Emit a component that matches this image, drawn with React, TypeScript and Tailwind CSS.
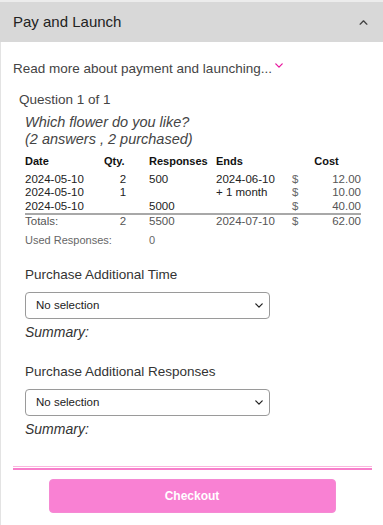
import React from "react";

const rows = [
  { date: "2024-05-10", qty: "2", resp: "500", ends: "2024-06-10", cost: "12.00" },
  { date: "2024-05-10", qty: "1", resp: "", ends: "+ 1 month", cost: "10.00" },
  { date: "2024-05-10", qty: "", resp: "5000", ends: "", cost: "40.00" },
];

const ChevronDown: React.FC<{ className?: string }> = ({ className }) => (
  <svg viewBox="0 0 10 6" className={className} fill="none" stroke="currentColor" strokeWidth="1.6" strokeLinecap="round" strokeLinejoin="round">
    <path d="M1 1l4 4 4-4" />
  </svg>
);

const PurchaseBlock: React.FC<{ title: string }> = ({ title }) => (
  <div className="pl-[12px]">
    <div className="text-[13.5px] leading-[18px] text-[#333]">{title}</div>
    <div className="relative mt-[8px] w-[245px]">
      <select className="h-[27px] w-full appearance-none rounded-[4px] border border-[#9a9a9a] bg-white pl-[10px] text-[11.5px] text-[#222] outline-none">
        <option>No selection</option>
      </select>
      <ChevronDown className="pointer-events-none absolute right-[7px] top-[11px] h-[5px] w-[8px] text-[#222]" />
    </div>
    <div className="mt-[4px] text-[14px] italic leading-[18px] text-[#333]">Summary:</div>
  </div>
);

const App: React.FC = () => {
  return (
    <div className="h-[525px] w-[383px] overflow-hidden bg-white font-['Liberation_Sans',Arial,sans-serif] text-[#333]">
      {/* Accordion header */}
      <div className="flex h-[42px] items-center justify-between border-t-2 border-[#ececec] bg-[#d8d8d8] pl-[13px] pr-[15px]">
        <span className="text-[15px] text-[#222]">Pay and Launch</span>
        <svg viewBox="0 0 10 6" className="h-[5px] w-[9px] text-[#444]" fill="none" stroke="currentColor" strokeWidth="1.6" strokeLinecap="round" strokeLinejoin="round">
          <path d="M1 5l4-4 4 4" />
        </svg>
      </div>

      {/* Body */}
      <div className="h-[483px] border-l border-[#e3e3e3] px-[12px] pt-[18px]">
        <div className="flex items-start text-[13.5px] leading-[18px] text-[#444]">
          <span>Read more about payment and launching...</span>
          <ChevronDown className="ml-[3px] mt-[3px] h-[5px] w-[8px] text-[#e8179e]" />
        </div>

        <div className="mt-[13px] pl-[6px] text-[13.5px] leading-[18px] text-[#444]">Question 1 of 1</div>

        <div className="pl-[12px]">
          <div className="mt-[5px] text-[14.5px] italic leading-[17px] text-[#444]">
            Which flower do you like?
            <br />
            (2 answers , 2 purchased)
          </div>

          <table className="mt-[7px] w-[336px] table-fixed border-collapse text-[11.5px] leading-[13.5px]">
            <colgroup>
              <col className="w-[79px]" />
              <col className="w-[38px]" />
              <col className="w-[74px]" />
              <col className="w-[76px]" />
              <col className="w-[18px]" />
              <col />
            </colgroup>
            <thead>
              <tr className="text-[11px] font-bold text-[#111]">
                <td className="pb-[4px] text-left">Date</td>
                <td className="pb-[4px] text-left">Qty.</td>
                <td className="pb-[4px] pl-[7px] text-left">Responses</td>
                <td className="pb-[4px] text-left">Ends</td>
                <td colSpan={2} className="pb-[4px] text-center">Cost</td>
              </tr>
            </thead>
            <tbody>
              {rows.map((r, i) => (
                <tr key={i} className="text-[#222]">
                  <td>{r.date}</td>
                  <td className="text-center">{r.qty}</td>
                  <td className="pl-[7px]">{r.resp}</td>
                  <td>{r.ends}</td>
                  <td className="text-[#666]">$</td>
                  <td className="text-right text-[#555]">{r.cost}</td>
                </tr>
              ))}
              <tr className="border-t-2 border-[#a8a8a8] text-[#555]">
                <td>Totals:</td>
                <td className="text-center">2</td>
                <td className="pl-[7px]">5500</td>
                <td>2024-07-10</td>
                <td className="text-[#666]">$</td>
                <td className="text-right">62.00</td>
              </tr>
              <tr className="text-[11px] text-[#666]">
                <td colSpan={2} className="pt-[5px]">Used Responses:</td>
                <td className="pl-[7px] pt-[5px]">0</td>
                <td colSpan={3} />
              </tr>
            </tbody>
          </table>
        </div>

        <div className="mt-[19px]">
          <PurchaseBlock title="Purchase Additional Time" />
        </div>
        <div className="mt-[22px]">
          <PurchaseBlock title="Purchase Additional Responses" />
        </div>

        {/* Divider */}
        <div className="mt-[28px] w-[359px] border-t border-b-2 border-t-[#fbb6de] border-b-[#f77fcb] pt-[1px]" />

        <div className="mt-[9px] flex justify-center">
          <button className="h-[34px] w-[287px] rounded-[4px] border border-[#f58ad3] bg-[#f981d3] text-[12px] font-bold text-white">
            Checkout
          </button>
        </div>
      </div>
    </div>
  );
};

export default App;
